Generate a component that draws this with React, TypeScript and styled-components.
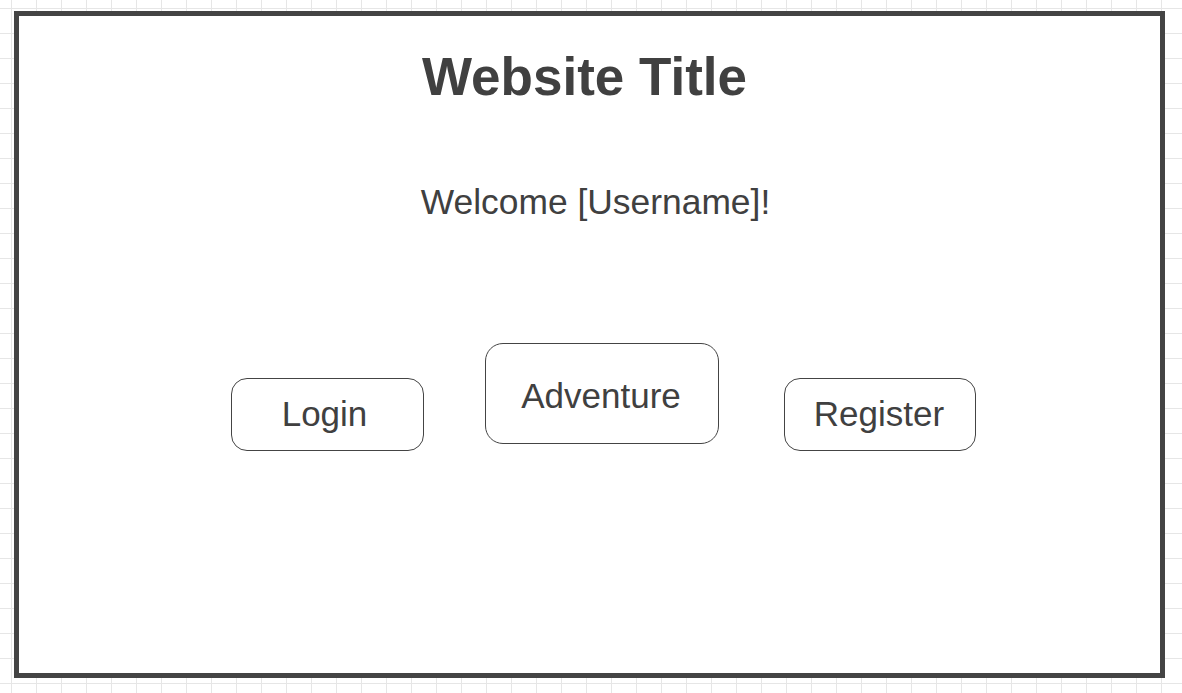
import styled, { createGlobalStyle } from "styled-components";

const GlobalStyle = createGlobalStyle`
  html, body {
    margin: 0;
    padding: 0;
  }
  body {
    width: 1182px;
    height: 693px;
    overflow: hidden;
    font-family: "Liberation Sans", Arial, sans-serif;
    background-color: #ffffff;
    background-image:
      linear-gradient(to right, #e6e6e6 1px, transparent 1px),
      linear-gradient(to bottom, #e6e6e6 1px, transparent 1px);
    background-size: 25px 25px;
    background-position: 11px 8px;
  }
`;

const Frame = styled.main`
  box-sizing: border-box;
  width: 1151px;
  height: 667px;
  margin: 11px 0 0 14px;
  border: 5px solid #444444;
  background: #ffffff;
  display: flex;
  flex-direction: column;
  align-items: center;
  padding-top: 31px;
  color: #404040;
`;

const Title = styled.h1`
  margin: 0;
  padding-right: 10px;
  font-size: 53px;
  line-height: 60px;
  font-weight: bold;
`;

const Welcome = styled.p`
  margin: 75px 0 0;
  padding-left: 12px;
  font-size: 35.4px;
  line-height: 40px;
`;

const ButtonRow = styled.div`
  margin-top: 121px;
  padding-left: 28px;
  display: flex;
  align-items: flex-start;
`;

const Button = styled.button<{
  $w: number;
  $h: number;
  $r: number;
  $top: number;
  $left: number;
  $dx: number;
  $dy: number;
}>`
  box-sizing: border-box;
  width: ${(p) => p.$w}px;
  height: ${(p) => p.$h}px;
  margin: ${(p) => p.$top}px 0 0 ${(p) => p.$left}px;
  border: 1px solid #444444;
  border-radius: ${(p) => p.$r}px;
  background: #ffffff;
  color: #404040;
  font-family: "Liberation Sans", Arial, sans-serif;
  font-size: 35px;
  padding: ${(p) => (p.$dy > 0 ? p.$dy * 2 : 0)}px ${(p) => (p.$dx < 0 ? -p.$dx * 2 : 0)}px
    ${(p) => (p.$dy < 0 ? -p.$dy * 2 : 0)}px 0;
  display: flex;
  align-items: center;
  justify-content: center;
`;

const buttons = [
  { label: "Login", w: 193, h: 73, r: 16, top: 35, left: 0, dx: -3, dy: -1 },
  { label: "Adventure", w: 234, h: 101, r: 18, top: 0, left: 61, dx: -1, dy: 2 },
  { label: "Register", w: 192, h: 73, r: 16, top: 35, left: 65, dx: -1, dy: -1 },
];

const App = () => (
  <>
    <GlobalStyle />
    <Frame>
      <Title>Website Title</Title>
      <Welcome>Welcome [Username]!</Welcome>
      <ButtonRow>
        {buttons.map((b) => (
          <Button
            key={b.label}
            $w={b.w}
            $h={b.h}
            $r={b.r}
            $top={b.top}
            $left={b.left}
            $dx={b.dx}
            $dy={b.dy}
          >
            {b.label}
          </Button>
        ))}
      </ButtonRow>
    </Frame>
  </>
);

export default App;
